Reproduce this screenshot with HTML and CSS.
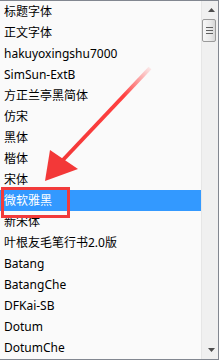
FILE: index.html
```html
<!DOCTYPE html>
<html>
<head>
<meta charset="utf-8">
<link rel="stylesheet" href="styles.css">
</head>
<body>
<div class="listbox">
  <ul class="list">
    <li>标题字体</li>
    <li>正文字体</li>
    <li>hakuyoxingshu7000</li>
    <li>SimSun-ExtB</li>
    <li>方正兰亭黑简体</li>
    <li>仿宋</li>
    <li>黑体</li>
    <li>楷体</li>
    <li>宋体</li>
    <li class="selected">微软雅黑</li>
    <li>新宋体</li>
    <li>叶根友毛笔行书2.0版</li>
    <li>Batang</li>
    <li>BatangChe</li>
    <li>DFKai-SB</li>
    <li>Dotum</li>
    <li>DotumChe</li>
  </ul>
  <div class="scrollbar">
    <div class="sbtn">
      <svg width="7" height="4" viewBox="0 0 7 4"><polygon points="3.5,0 7,4 0,4" fill="#4d4d4d"/></svg>
    </div>
    <div class="thumb"><span></span><span></span><span></span></div>
    <div class="track"></div>
    <div class="sbtn">
      <svg width="7" height="4" viewBox="0 0 7 4"><polygon points="0,0 7,0 3.5,4" fill="#4d4d4d"/></svg>
    </div>
  </div>
  <div class="mark"></div>
  <svg class="arrow" width="219" height="360" viewBox="0 0 219 360">
    <defs>
      <linearGradient id="fade" x1="150" y1="68" x2="62" y2="160" gradientUnits="userSpaceOnUse">
        <stop offset="0" stop-color="#ff4040" stop-opacity="0.1"/>
        <stop offset="0.3" stop-color="#ff4040" stop-opacity="1"/>
        <stop offset="1" stop-color="#f33838" stop-opacity="1"/>
      </linearGradient>
    </defs>
    <line x1="150" y1="68" x2="62" y2="161" stroke="url(#fade)" stroke-width="4"/>
    <polygon points="45,181 50,150 78,169" fill="#f33838"/>
  </svg>
</div>
</body>
</html>
```
FILE: styles.css
```css
html, body {
  margin: 0;
  padding: 0;
  background: #fafafa;
}
.listbox {
  position: relative;
  display: flex;
  width: 219px;
  height: 360px;
  box-sizing: border-box;
  border-top: 1px solid #828790;
  border-right: 1px solid #828790;
  border-bottom: 1px solid #828790;
  overflow: hidden;
  font-family: "Noto Sans", "Noto Sans CJK SC", sans-serif;
  font-size: 12px;
  color: #000;
}
.list {
  flex: 1;
  margin: 0;
  padding: 0;
  list-style: none;
  background: #fafafa;
}
.list li {
  height: 21px;
  line-height: 21px;
  padding-left: 4px;
  white-space: nowrap;
}
.list li.selected {
  background: #3399ff;
  color: #fff;
}
.scrollbar {
  width: 16px;
  background: #f0f0f0;
  border-left: 1px solid #e6e6e6;
  display: flex;
  flex-direction: column;
}
.sbtn {
  height: 18px;
  display: flex;
  align-items: center;
  justify-content: center;
  padding-left: 2px;
}
.thumb {
  width: 12px;
  height: 21px;
  border: 1px solid #9a9a9a;
  border-radius: 2px;
  background: linear-gradient(to right, #f7f7f7, #e9e9e9 60%, #d6d6d6);
  display: flex;
  flex-direction: column;
  align-items: center;
  justify-content: center;
  gap: 2px;
}
.thumb span {
  display: block;
  width: 7px;
  height: 1px;
  background: #606060;
}
.track {
  flex: 1;
}
.mark {
  position: absolute;
  left: 1px;
  top: 186px;
  width: 63px;
  height: 25px;
  border: 3px solid #f23b3b;
}
.arrow {
  position: absolute;
  left: 0;
  top: -1px;
}
```
